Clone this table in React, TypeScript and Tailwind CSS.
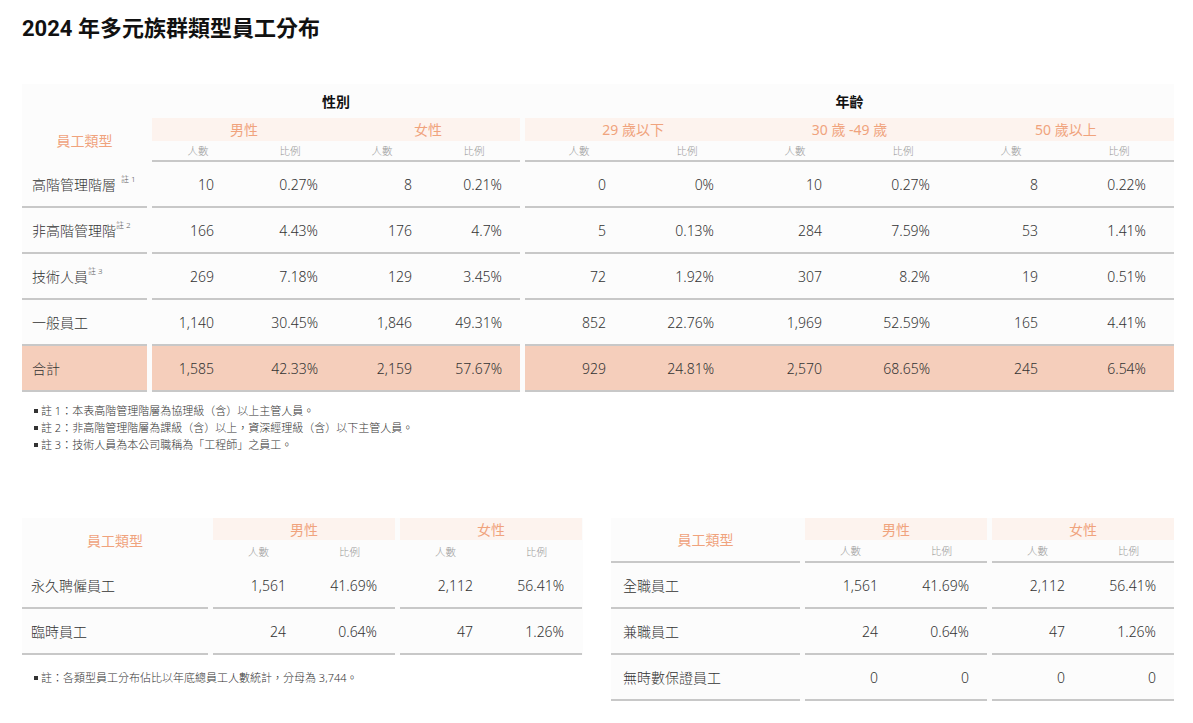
const FONT = { fontFamily: '"Noto Sans", "Noto Sans CJK TC", sans-serif' };

type TopRow = {
  label: string;
  note?: string;
  gap?: boolean;
  gender: string[];
  age: string[];
  total?: boolean;
};

const topRows: TopRow[] = [
  { label: "高階管理階層", note: "註 1", gap: true, gender: ["10", "0.27%", "8", "0.21%"], age: ["0", "0%", "10", "0.27%", "8", "0.22%"] },
  { label: "非高階管理階", note: "註 2", gender: ["166", "4.43%", "176", "4.7%"], age: ["5", "0.13%", "284", "7.59%", "53", "1.41%"] },
  { label: "技術人員", note: "註 3", gender: ["269", "7.18%", "129", "3.45%"], age: ["72", "1.92%", "307", "8.2%", "19", "0.51%"] },
  { label: "一般員工", gender: ["1,140", "30.45%", "1,846", "49.31%"], age: ["852", "22.76%", "1,969", "52.59%", "165", "4.41%"] },
  { label: "合計", total: true, gender: ["1,585", "42.33%", "2,159", "57.67%"], age: ["929", "24.81%", "2,570", "68.65%", "245", "6.54%"] },
];

const genderPad = ["pr-[30px]", "pr-[18px]", "pr-[16px]", "pr-[18px]"];

function Note({ children }: { children: React.ReactNode }) {
  return (
    <div className="flex items-center gap-[3px] text-[11px] font-light leading-[17px] text-[#333]">
      <span className="block h-[4px] w-[4px] bg-[#333]" />
      <span>{children}</span>
    </div>
  );
}

function SubHead({ cols, width, line }: { cols: number; width: string; line?: boolean }) {
  return (
    <div className={`flex h-[23px] items-center pt-[2px] ${line ? "border-b-2 border-[#c8c8c8]" : ""}`}>
      {Array.from({ length: cols }).map((_, i) => (
        <div key={i} className={`${width} text-center text-[10.5px] font-light text-[#9a9a9a]`}>
          {i % 2 === 0 ? "人數" : "比例"}
        </div>
      ))}
    </div>
  );
}

function TopTable() {
  return (
    <div className="w-[1152px] bg-[#fcfcfc]">
      <div className="flex">
        <div className="flex w-[125px] flex-col">
          <div className="h-[34px]" />
          <div className="flex h-[44px] items-center justify-center text-[14px] text-[#f0a37d]">員工類型</div>
        </div>
        <div className="ml-[5px] flex w-[368px] flex-col">
          <div className="flex h-[34px] items-center justify-center text-[14px] font-bold text-[#111]">性別</div>
          <div className="flex h-[23px] items-center bg-[#fdf3ee] text-[14px] text-[#f0a37d]">
            <div className="flex-1 text-center">男性</div>
            <div className="flex-1 text-center">女性</div>
          </div>
          <div className="flex h-[21px] items-center border-b-2 border-[#c8c8c8] pt-[2px]">
            {["人數", "比例", "人數", "比例"].map((t, i) => (
              <div key={i} className="w-[92px] text-center text-[10.5px] font-light text-[#9a9a9a]">{t}</div>
            ))}
          </div>
        </div>
        <div className="ml-[5px] flex w-[649px] flex-col">
          <div className="flex h-[34px] items-center justify-center text-[14px] font-bold text-[#111]">年齡</div>
          <div className="flex h-[23px] items-center bg-[#fdf3ee] text-[14px] text-[#f0a37d]">
            <div className="flex-1 text-center">29 歲以下</div>
            <div className="flex-1 text-center">30 歲 -49 歲</div>
            <div className="flex-1 text-center">50 歲以上</div>
          </div>
          <div className="flex h-[21px] items-center border-b-2 border-[#c8c8c8] pt-[2px]">
            {["人數", "比例", "人數", "比例", "人數", "比例"].map((t, i) => (
              <div key={i} className="w-[108px] text-center text-[10.5px] font-light text-[#9a9a9a]">{t}</div>
            ))}
          </div>
        </div>
      </div>

      {topRows.map((r) => {
        const bg = r.total ? "bg-[#f5cebb]" : "";
        return (
          <div key={r.label} className="flex text-[14px] font-light text-[#333]">
            <div className={`flex h-[46px] w-[125px] items-center border-b-2 border-[#c8c8c8] pl-[10px] ${bg}`}>
              <span>{r.label}</span>
              {r.note && (
                <span className={`${r.gap ? "ml-[5px]" : ""} -mt-[10px] text-[8px] text-[#555]`}>{r.note}</span>
              )}
            </div>
            <div className={`ml-[5px] flex h-[46px] w-[368px] items-center border-b-2 border-[#c8c8c8] ${bg}`}>
              {r.gender.map((v, i) => (
                <div key={i} className={`w-[92px] text-right ${genderPad[i]}`}>{v}</div>
              ))}
            </div>
            <div className={`ml-[5px] flex h-[46px] w-[649px] items-center border-b-2 border-[#c8c8c8] ${bg}`}>
              {r.age.map((v, i) => (
                <div key={i} className="w-[108px] pr-[27px] text-right">{v}</div>
              ))}
            </div>
          </div>
        );
      })}
    </div>
  );
}

type SmallRow = { label: string; vals: string[] };

function SmallTable({
  rows,
  labelW,
  labelPad,
  line,
}: {
  rows: SmallRow[];
  labelW: string;
  labelPad: string;
  line?: boolean;
}) {
  return (
    <div className="bg-[#fcfcfc]">
      <div className="flex">
        <div
          className={`flex h-[45px] ${labelW} items-center justify-center text-[14px] text-[#f0a37d] ${
            line ? "border-b-2 border-[#c8c8c8]" : ""
          }`}
        >
          員工類型
        </div>
        {["男性", "女性"].map((g) => (
          <div key={g} className="ml-[5px] flex w-[182px] flex-col">
            <div className="flex h-[22px] items-center justify-center bg-[#fdf3ee] text-[14px] text-[#f0a37d]">{g}</div>
            <SubHead cols={2} width="w-[91px]" line={line} />
          </div>
        ))}
      </div>
      {rows.map((r) => (
        <div key={r.label} className="flex text-[14px] font-light text-[#333]">
          <div className={`flex h-[46px] ${labelW} items-center border-b-2 border-[#c8c8c8] ${labelPad}`}>{r.label}</div>
          {[0, 2].map((s) => (
            <div key={s} className="ml-[5px] flex h-[46px] w-[182px] items-center border-b-2 border-[#c8c8c8]">
              <div className="w-[91px] pr-[18px] text-right">{r.vals[s]}</div>
              <div className="w-[91px] pr-[18px] text-right">{r.vals[s + 1]}</div>
            </div>
          ))}
        </div>
      ))}
    </div>
  );
}

export default function App() {
  return (
    <div className="min-h-[723px] bg-white pl-[22px]" style={FONT}>
      <h1
        className="pt-[14px] text-[22px] font-bold leading-[30px] text-[#111]"
        style={{ fontFamily: 'Roboto, "Noto Sans CJK TC", sans-serif' }}
      >
        2024 年多元族群類型員工分布
      </h1>

      <div className="mt-[40px]">
        <TopTable />
      </div>

      <div className="mt-[10px] pl-[12px]">
        <Note>註 1：本表高階管理階層為協理級（含）以上主管人員。</Note>
        <Note>註 2：非高階管理階層為課級（含）以上，資深經理級（含）以下主管人員。</Note>
        <Note>註 3：技術人員為本公司職稱為「工程師」之員工。</Note>
      </div>

      <div className="mt-[65px] flex gap-[28px]">
        <div className="w-[561px]">
          <SmallTable
            labelW="w-[186px]"
            labelPad="pl-[9px]"
            rows={[
              { label: "永久聘僱員工", vals: ["1,561", "41.69%", "2,112", "56.41%"] },
              { label: "臨時員工", vals: ["24", "0.64%", "47", "1.26%"] },
            ]}
          />
          <div className="mt-[14px] pl-[12px]">
            <Note>註：各類型員工分布佔比以年底總員工人數統計，分母為 3,744。</Note>
          </div>
        </div>
        <div className="w-[563px]">
          <SmallTable
            labelW="w-[189px]"
            labelPad="pl-[12px]"
            line
            rows={[
              { label: "全職員工", vals: ["1,561", "41.69%", "2,112", "56.41%"] },
              { label: "兼職員工", vals: ["24", "0.64%", "47", "1.26%"] },
              { label: "無時數保證員工", vals: ["0", "0", "0", "0"] },
            ]}
          />
        </div>
      </div>
    </div>
  );
}
